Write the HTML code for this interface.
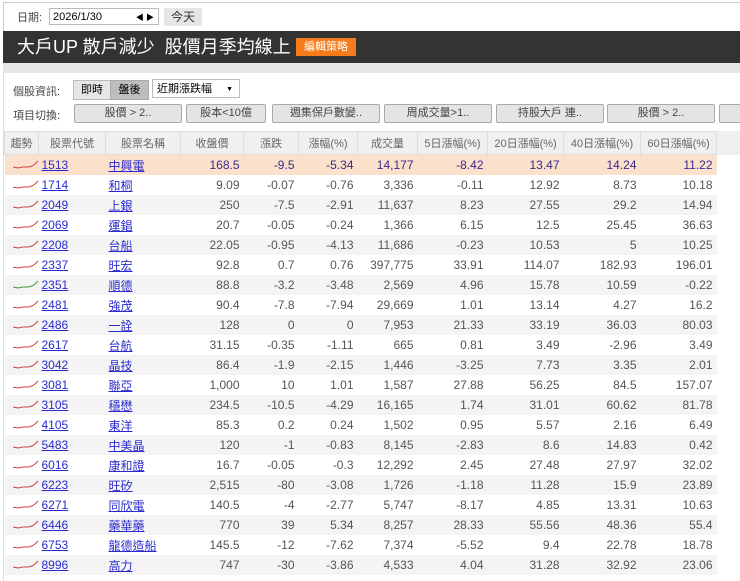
<!DOCTYPE html><html><head><meta charset="utf-8"><style>
body{margin:0;width:740px;height:581px;overflow:hidden;background:#fff;font-family:"Liberation Sans","Noto Sans CJK TC",sans-serif;position:relative}
.a{position:absolute}
.top{left:3px;top:2px;width:737px;height:29px;border-top:1px solid #ccc;border-left:1px solid #ccc}
.title{left:3px;top:31px;width:737px;height:32px;background:#333;color:#fff;font-size:18px;line-height:32px;white-space:nowrap}
.band{left:3px;top:63px;width:737px;height:10px;background:#e6e6e6}
.lb{left:3px;top:73px;width:1px;height:508px;background:#ddd}
.btn{position:absolute;top:104px;height:17px;background:#e4e4e4;border:1px solid #aaa;border-radius:2px;font-size:11px;color:#444;text-align:center;line-height:17px}
table{position:absolute;left:4px;top:131px;border-collapse:collapse;font-size:12px;color:#555;table-layout:fixed}
th{height:22px;background:#f0f0f0;border:1px solid #ddd;font-weight:normal;font-size:11px;color:#666;padding:0}
td{height:20px;padding:0 4px 0 0;text-align:right;border:none}
tr:nth-child(odd) td{background:#f4f4f4}
tr.hl td{background:#fbe1cc;color:#3a2a8a}
td.c,td.n{text-align:left;padding-left:3px}
td a{color:#2a2ad0;text-decoration:underline}
td.t{padding:0 0 0 4px}
</style></head><body>
<div class="a top"></div>
<div class="a" style="left:17px;top:9px;font-size:11px;color:#444">日期:</div>
<div class="a" style="left:49px;top:8px;height:17px;border:1px solid #bbb;font-size:11px;line-height:17px;padding-left:3px;box-sizing:border-box;width:110px">2026/1/30<span style="position:absolute;right:4px;font-size:8px">◀ ▶</span></div>
<div class="a" style="left:164px;top:8px;width:38px;height:18px;background:#e6e6e6;font-size:12px;text-align:center;line-height:18px;color:#333">今天</div>
<div class="a title"><span style="position:absolute;left:14px">大戶UP 散戶減少&nbsp; 股價月季均線上</span><span style="position:absolute;left:293px;top:7px;background:#f57b1d;color:#fff;font-size:11px;line-height:18px;padding:0 8px;border-radius:1px">編輯策略</span></div>
<div class="a band"></div><div class="a lb"></div>
<div class="a" style="left:13px;top:83px;font-size:11px;color:#444">個股資訊:</div>
<div class="a" style="left:73px;top:80px;width:36px;height:18px;background:#e6e6e6;border:1px solid #bbb;font-size:11px;text-align:center;line-height:18px">即時</div>
<div class="a" style="left:110px;top:80px;width:37px;height:18px;background:#bdbdbd;border:1px solid #aaa;font-size:11px;text-align:center;line-height:18px">盤後</div>
<div class="a" style="left:152px;top:79px;height:19px;border:1px solid #bbb;font-size:11px;line-height:19px;padding-left:4px;box-sizing:border-box;width:88px">近期漲跌幅<span style="position:absolute;right:6px;font-size:7px">▼</span></div>
<div class="a" style="left:13px;top:107px;font-size:11px;color:#444">項目切換:</div>
<div class="btn" style="left:74px;width:106px">股價 &gt; 2..</div>
<div class="btn" style="left:186px;width:78px">股本&lt;10億</div>
<div class="btn" style="left:272px;width:106px">週集保戶數變..</div>
<div class="btn" style="left:384px;width:106px">周成交量&gt;1..</div>
<div class="btn" style="left:496px;width:106px">持股大戶 連..</div>
<div class="btn" style="left:607px;width:106px">股價 &gt; 2..</div>
<div class="btn" style="left:719px;width:30px"></div>
<div class="a" style="left:716px;top:131px;width:24px;height:24px;background:#f0f0f0"></div>
<table>
<colgroup><col style="width:34px"><col style="width:67px"><col style="width:75px"><col style="width:63px"><col style="width:55px"><col style="width:59px"><col style="width:60px"><col style="width:70px"><col style="width:76px"><col style="width:77px"><col style="width:76px"></colgroup>
<tr><th>趨勢</th><th>股票代號</th><th>股票名稱</th><th>收盤價</th><th>漲跌</th><th>漲幅(%)</th><th>成交量</th><th>5日漲幅(%)</th><th>20日漲幅(%)</th><th>40日漲幅(%)</th><th>60日漲幅(%)</th></tr>
<tbody id="b"></tbody>
</table>
<script>
var d=[["1513","中興電","168.5","-9.5","-5.34","14,177","-8.42","13.47","14.24","11.22"],
["1714","和桐","9.09","-0.07","-0.76","3,336","-0.11","12.92","8.73","10.18"],
["2049","上銀","250","-7.5","-2.91","11,637","8.23","27.55","29.2","14.94"],
["2069","運錩","20.7","-0.05","-0.24","1,366","6.15","12.5","25.45","36.63"],
["2208","台船","22.05","-0.95","-4.13","11,686","-0.23","10.53","5","10.25"],
["2337","旺宏","92.8","0.7","0.76","397,775","33.91","114.07","182.93","196.01"],
["2351","順德","88.8","-3.2","-3.48","2,569","4.96","15.78","10.59","-0.22"],
["2481","強茂","90.4","-7.8","-7.94","29,669","1.01","13.14","4.27","16.2"],
["2486","一詮","128","0","0","7,953","21.33","33.19","36.03","80.03"],
["2617","台航","31.15","-0.35","-1.11","665","0.81","3.49","-2.96","3.49"],
["3042","晶技","86.4","-1.9","-2.15","1,446","-3.25","7.73","3.35","2.01"],
["3081","聯亞","1,000","10","1.01","1,587","27.88","56.25","84.5","157.07"],
["3105","穩懋","234.5","-10.5","-4.29","16,165","1.74","31.01","60.62","81.78"],
["4105","東洋","85.3","0.2","0.24","1,502","0.95","5.57","2.16","6.49"],
["5483","中美晶","120","-1","-0.83","8,145","-2.83","8.6","14.83","0.42"],
["6016","康和證","16.7","-0.05","-0.3","12,292","2.45","27.48","27.97","32.02"],
["6223","旺矽","2,515","-80","-3.08","1,726","-1.18","11.28","15.9","23.89"],
["6271","同欣電","140.5","-4","-2.77","5,747","-8.17","4.85","13.31","10.63"],
["6446","藥華藥","770","39","5.34","8,257","28.33","55.56","48.36","55.4"],
["6753","龍德造船","145.5","-12","-7.62","7,374","-5.52","9.4","22.78","18.78"],
["8996","高力","747","-30","-3.86","4,533","4.04","31.28","32.92","23.06"]];
var h="";d.forEach(function(r,i){var c=i==6?"#3a9a3a":"#d04040";
h+='<tr'+(i==0?' class="hl"':'')+'><td class="t"><svg width="26" height="12"><polyline points="0,9 5,10 10,9 15,9 19,8 22,6 25,3" fill="none" stroke="'+c+'" stroke-width="1"/></svg></td><td class="c"><a>'+r[0]+'</a></td><td class="n"><a>'+r[1]+'</a></td>';
for(var j=2;j<10;j++)h+='<td>'+r[j]+'</td>';h+='</tr>';});
document.getElementById("b").innerHTML=h;
</script>
</body></html>
